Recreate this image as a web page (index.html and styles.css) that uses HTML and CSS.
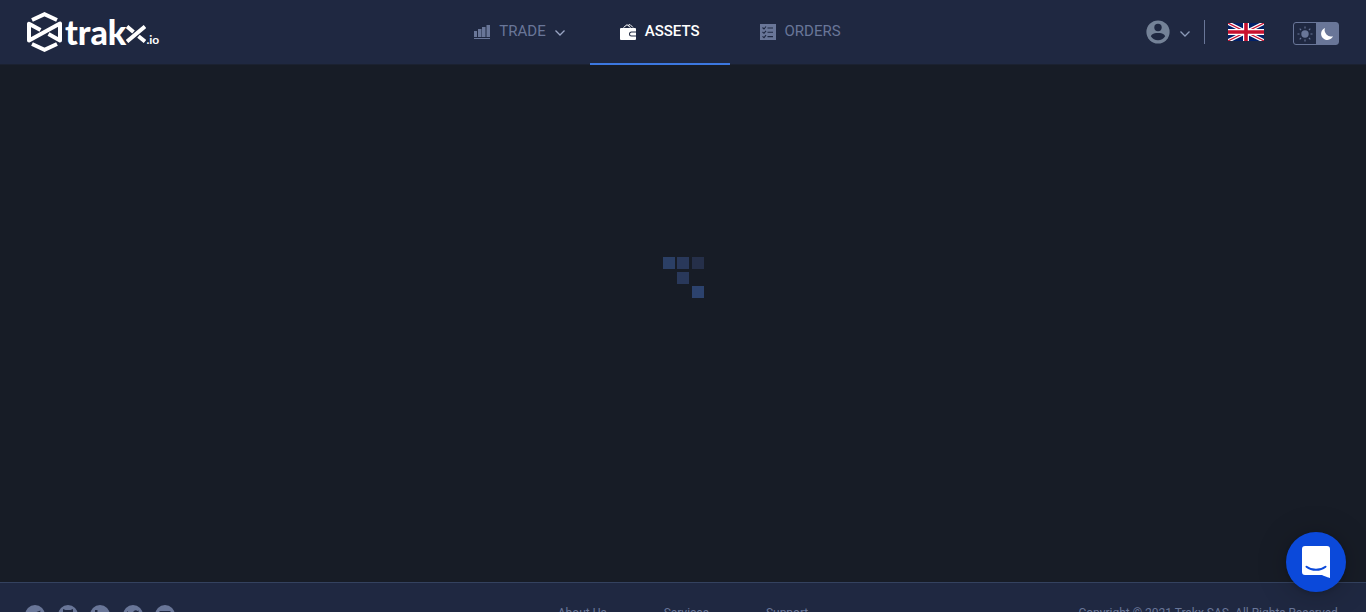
FILE: index.html
```html
<!DOCTYPE html>
<html lang="en">
<head>
<meta charset="utf-8">
<title>Trakx - Assets</title>
<meta name="viewport" content="width=device-width, initial-scale=1">
<link rel="stylesheet" href="styles.css">
</head>
<body>
<header class="header">
  <a class="logo" href="#" aria-label="trakx.io">
    <svg class="logo-mark" width="36" height="40" viewBox="0 0 36 40" fill="none" stroke="#fff" stroke-width="4"><path d="M5 8 17.500 2.300 30 8M5 32 17.500 37.700 30 32"/><path stroke-linejoin="round" d="M13.500 18 2 11.800V28.500L33 11.500V28.500L21.500 22"/></svg>
    <span class="logo-name">trak</span>
    <svg class="logo-x" width="20" height="18" viewBox="0 0 20 18" fill="none" stroke="#fff" stroke-width="4"><path d="M1 16.500 19 1.500M1 1.500 7.500 7M12.500 11.200 19 16.500"/></svg>
    <span class="logo-tld">.io</span>
  </a>
  <nav class="nav">
    <a class="nav-item" href="#">
      <svg width="16" height="16" viewBox="0 0 16 16" fill="currentColor"><path d="M0 7h3v6H0zM4 5h3.500v8H4zM8 3h3.500v10H8zM12.500 1H16v12h-3.500zM0 14h16v1H0z"/></svg>
      <span>TRADE</span>
      <svg class="caret" width="10" height="6" viewBox="0 0 10 6" fill="none" stroke="#9aa5c4" stroke-width="1.3"><path d="M.5.5 5 5 9.500.5"/></svg>
    </a>
    <a class="nav-item active" href="#" aria-current="page">
      <svg width="16" height="16" viewBox="0 0 16 16" fill="currentColor"><path d="M1 4h14a1 1 0 0 1 1 1v2.500h-4.500a2.500 2.500 0 0 0 0 5H16V15a1 1 0 0 1-1 1H1a1 1 0 0 1-1-1V5a1 1 0 0 1 1-1z"/><path d="M11.500 8.500H16v3h-4.500a1.500 1.500 0 0 1 0-3z"/><path d="M3.500 3.500 7 .7l3.500 2.800M8 1.500l2-1 3 3" fill="none" stroke="currentColor"/></svg>
      <span>ASSETS</span>
    </a>
    <a class="nav-item" href="#">
      <svg width="16" height="16" viewBox="0 0 16 16"><path fill="currentColor" d="M0 0h16v16H0z"/><path d="M2.500 3.500 4 5l2-2.500M2.500 8 4 9.300l2-2.500M2.500 12.300 4 13.600l2-2.500M7.500 4H13M7.500 8.300H13M7.500 12.600H13" fill="none" stroke="#1f2841" stroke-width="1.100"/></svg>
      <span>ORDERS</span>
    </a>
  </nav>
  <div class="tools">
    <button class="account" type="button" aria-label="Account">
      <svg width="24" height="24" viewBox="0 0 24 24"><circle cx="12" cy="12" r="11.600" fill="#748297"/><circle cx="12" cy="7.500" r="3.700" fill="#1f2841"/><path d="M4.800 16.200C6 13.500 9.500 13 12 13s6 .5 7.200 3.200C17.500 19 15 20.300 12 20.300S6.500 19 4.800 16.200z" fill="#1f2841"/></svg>
      <svg class="caret" width="10" height="6" viewBox="0 0 10 6" fill="none" stroke="#8b9ab8" stroke-width="1.300"><path d="M.5.5 5 5 9.500.5"/></svg>
    </button>
    <button class="language" type="button" aria-label="English">
      <svg width="36" height="18" viewBox="0 0 36 18"><path fill="#012169" d="M0 0h36v18H0z"/><path d="M0 0 36 18M36 0 0 18" stroke="#fff" stroke-width="3.800"/><path d="M0 0 18 9M36 18 18 9M36 0 18 9M0 18 18 9" stroke="#c8102e" stroke-width="1.200"/><path d="M18 0v18M0 9h36" stroke="#fff" stroke-width="6"/><path d="M18 0v18M0 9h36" stroke="#c8102e" stroke-width="3.600"/></svg>
    </button>
    <div class="theme" role="group" aria-label="Theme">
      <button type="button" aria-label="Light theme"><svg width="16" height="16" viewBox="0 0 16 16"><circle cx="8" cy="8" r="3.700" fill="#697698"/><path d="M8 .5v2M8 13.500v2M.5 8h2M13.500 8h2M2.700 2.700l1.400 1.400M11.900 11.900l1.400 1.400M2.700 13.300l1.400-1.400M11.900 4.100l1.400-1.400" stroke="#697698" stroke-width="1.100"/></svg></button>
      <button class="on" type="button" aria-label="Dark theme" aria-pressed="true"><svg width="14" height="14" viewBox="0 0 14 14"><path fill="#fff" d="M5 1a6.200 6.200 0 1 0 8 8.200A6.400 6.400 0 0 1 5 1z"/></svg></button>
    </div>
  </div>
</header>
<main class="content">
  <div class="loader" role="status" aria-label="Loading">
    <i class="cell bright"></i><i class="cell"></i><i class="cell dim"></i>
    <i class="cell middle"></i><i class="cell corner"></i>
  </div>
</main>
<footer class="footer">
  <div class="social">
    <a href="#" aria-label="Telegram"><svg width="20" height="20" viewBox="0 0 20 20"><path d="m3.500 10 12-4.500-2 10-4-3-2 2-.5-3.500z"/></svg></a>
    <a href="#" aria-label="Github"><svg width="20" height="20" viewBox="0 0 20 20"><path d="M5 4 7.500 5h5L15 4v6.500c0 3-2 4-3 4V18H8v-3.500c-1 0-3-1-3-4z"/></svg></a>
    <a href="#" aria-label="LinkedIn"><svg width="20" height="20" viewBox="0 0 20 20"><path d="M5 5h2.500v2H5zM5 8h2.500v7H5zM9 8h2v1c2-2 4.500-1 4.500 2v4H13v-4c0-1.500-1.500-1.500-1.500 0v4H9z"/></svg></a>
    <a href="#" aria-label="Twitter"><svg width="20" height="20" viewBox="0 0 20 20"><path d="M4 6c2 2 3.500 2.500 6 2.500 0-3 3-4 4.500-2.500L16 5.500 15 8c0 6-6 8.500-11 6l2.500-1C4 11.500 3.500 9 4 6z"/></svg></a>
    <a href="#" aria-label="Email"><svg width="20" height="20" viewBox="0 0 20 20"><path d="M4.500 6h11v1L10 10.500 4.500 7zM4.500 8.500 10 12l5.500-3.500V14h-11z"/></svg></a>
  </div>
  <nav class="links">
    <a href="#">About Us</a>
    <a href="#">Services</a>
    <a href="#">Support</a>
  </nav>
  <p class="copyright">Copyright © 2021 Trakx SAS. All Rights Reserved.</p>
</footer>
<button class="chat" type="button" aria-label="Open chat">
  <svg width="28" height="32" viewBox="0 0 28 32"><path fill="#fff" d="M3 0h22a3 3 0 0 1 3 3v29s-4-1.200-8-3H3a3 3 0 0 1-3-3V3a3 3 0 0 1 3-3z"/><path d="M4.500 20.700c5.500 4.200 13.500 4.200 19 0" fill="none" stroke="#0b49da" stroke-width="2" stroke-linecap="round"/></svg>
</button>
</body>
</html>
```
FILE: styles.css
```css
* {
  box-sizing: border-box;
}

html {
  overflow: hidden;
}

body {
  margin: 0;
  background: #171c26;
  color: #697698;
  font-family: Roboto, sans-serif;
}

a {
  color: inherit;
  text-decoration: none;
}

button {
  padding: 0;
  border: 0;
  background: none;
  color: inherit;
  cursor: pointer;
}

svg {
  display: block;
  flex-shrink: 0;
}

.header {
  display: flex;
  justify-content: space-between;
  height: 65px;
  padding: 0 27px;
  background: #1f2841;
  border-bottom: 1px solid #1b2130;
}

.logo {
  display: flex;
  align-items: center;
  width: 142px;
  color: #fff;
}

.logo-name {
  margin-left: 2px;
  font: 900 34px/40px Lato, sans-serif;
}

.logo-x {
  margin-top: 4px;
}

.logo-tld {
  margin-top: 15px;
  font: 700 12px/16px Lato, sans-serif;
}

.nav {
  display: flex;
  height: 65px;
}

.nav-item {
  display: flex;
  align-items: center;
  gap: 9px;
  padding: 0 30px;
  border-bottom: 2px solid transparent;
  font-size: 15px;
  line-height: 20px;
}

.nav-item span {
  padding-bottom: 2px;
}

.nav-item:first-child {
  padding-right: 25px;
}

.nav-item.active {
  border-color: #3c78e0;
  color: #fff;
  font-weight: 500;
}

.caret {
  margin-top: 3px;
}

.tools {
  display: flex;
  align-items: center;
}

.account {
  display: flex;
  align-items: center;
  gap: 10px;
  height: 24px;
  padding-right: 14px;
  border-right: 1px solid #697698;
}

.language {
  margin: 0 29px 0 23px;
}

.theme {
  display: flex;
  width: 46px;
  height: 23px;
  margin-top: 3px;
  border: 1px solid #697698;
  border-radius: 3px;
}

.theme button {
  display: grid;
  flex: 1;
  place-items: center;
}

.theme .on {
  background: #697698;
}

.content {
  min-height: calc(100vh - 95px);
  padding-top: 192px;
}

.loader {
  display: grid;
  grid-template-columns: repeat(3, 12px);
  grid-template-rows: repeat(3, 12px);
  place-content: space-between;
  width: 41px;
  height: 41px;
  margin: 0 auto;
}

.cell {
  background: #29385a;
}

.bright {
  background: #2b3f65;
}

.dim {
  background: #252f49;
}

.middle {
  grid-area: 2 / 2;
}

.corner {
  grid-area: 3 / 3;
  background: #2c426d;
}

.footer {
  display: grid;
  grid-template-columns: 1fr auto 1fr;
  align-items: start;
  padding: 20px 25px;
  background: #1f2841;
  border-top: 1px solid #34425f;
  font-size: 12px;
  line-height: 20px;
}

.social {
  display: flex;
  justify-content: space-between;
  width: 150px;
  padding-top: 2px;
}

.social a {
  border-radius: 50%;
  background: #697698;
  color: #1f2841;
}

.social svg {
  fill: currentColor;
}

.links {
  display: flex;
  gap: 57px;
}

.copyright {
  margin: 0;
  text-align: right;
}

.chat {
  position: fixed;
  right: 20px;
  bottom: 20px;
  display: grid;
  place-items: center;
  width: 60px;
  height: 60px;
  border-radius: 50%;
  background: #0b49da;
  box-shadow: 0 1px 6px #0003, 0 2px 32px #0003;
}
```
